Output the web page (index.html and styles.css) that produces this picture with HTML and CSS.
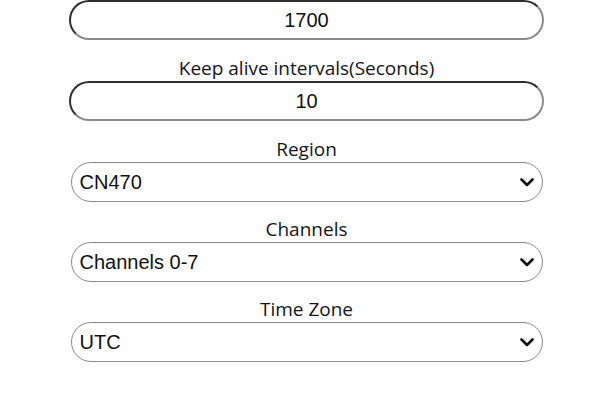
FILE: index.html
```html
<!DOCTYPE html>
<html lang="en">
<head>
<meta charset="utf-8">
<title>Settings</title>
<link rel="stylesheet" href="styles.css">
</head>
<body>
<form class="form">
  <div class="field first">
    <input class="text-input" type="text" value="1700">
  </div>
  <div class="field">
    <label class="label" for="keepalive">Keep alive intervals(Seconds)</label>
    <input class="text-input" id="keepalive" type="text" value="10">
  </div>
  <div class="field">
    <label class="label" for="region">Region</label>
    <div class="select-wrap">
      <select class="select" id="region"><option>CN470</option></select>
      <svg class="chevron" width="14" height="9" viewBox="0 0 14 9"><path d="M1.5 1.5 L7 7 L12.5 1.5" fill="none" stroke="#111" stroke-width="2.6" stroke-linecap="round" stroke-linejoin="round"/></svg>
    </div>
  </div>
  <div class="field tight">
    <label class="label" for="channels">Channels</label>
    <div class="select-wrap">
      <select class="select" id="channels"><option>Channels 0-7</option></select>
      <svg class="chevron" width="14" height="9" viewBox="0 0 14 9"><path d="M1.5 1.5 L7 7 L12.5 1.5" fill="none" stroke="#111" stroke-width="2.6" stroke-linecap="round" stroke-linejoin="round"/></svg>
    </div>
  </div>
  <div class="field tight">
    <label class="label" for="tz">Time Zone</label>
    <div class="select-wrap">
      <select class="select" id="tz"><option>UTC</option></select>
      <svg class="chevron" width="14" height="9" viewBox="0 0 14 9"><path d="M1.5 1.5 L7 7 L12.5 1.5" fill="none" stroke="#111" stroke-width="2.6" stroke-linecap="round" stroke-linejoin="round"/></svg>
    </div>
  </div>
</form>
</body>
</html>
```
FILE: styles.css
```css
html, body {
  margin: 0;
  padding: 0;
  background: #ffffff;
}
.form {
  width: 475px;
  margin-left: 69px;
  display: flex;
  flex-direction: column;
}
.field {
  display: flex;
  flex-direction: column;
  align-items: center;
  margin-top: 17px;
}
.field.first {
  margin-top: 0;
}
.field.tight {
  margin-top: 16px;
}
.label {
  font-family: "Open Sans", "Noto Sans", sans-serif;
  font-size: 19px;
  line-height: 22px;
  color: #14141c;
  margin-bottom: 2px;
}
.text-input {
  box-sizing: border-box;
  width: 475px;
  height: 40px;
  border: 2px solid;
  border-color: #2e2e2e #8a8a8a #8a8a8a #2e2e2e;
  border-radius: 20px;
  padding: 0 12px;
  font-family: "Liberation Sans", Arial, sans-serif;
  font-size: 20px;
  color: #111;
  text-align: center;
  background: #fff;
  outline: none;
}
.select-wrap {
  display: grid;
  width: 472px;
  align-items: center;
}
.select {
  grid-area: 1 / 1;
  -webkit-appearance: none;
  appearance: none;
  box-sizing: border-box;
  width: 100%;
  height: 40px;
  border: 1px solid #8a8a8a;
  border-radius: 20px;
  padding: 0 30px 0 8px;
  font-family: "Liberation Sans", Arial, sans-serif;
  font-size: 20px;
  color: #111;
  background: #fff;
  outline: none;
}
.chevron {
  grid-area: 1 / 1;
  justify-self: end;
  margin-right: 9px;
  pointer-events: none;
}
```
